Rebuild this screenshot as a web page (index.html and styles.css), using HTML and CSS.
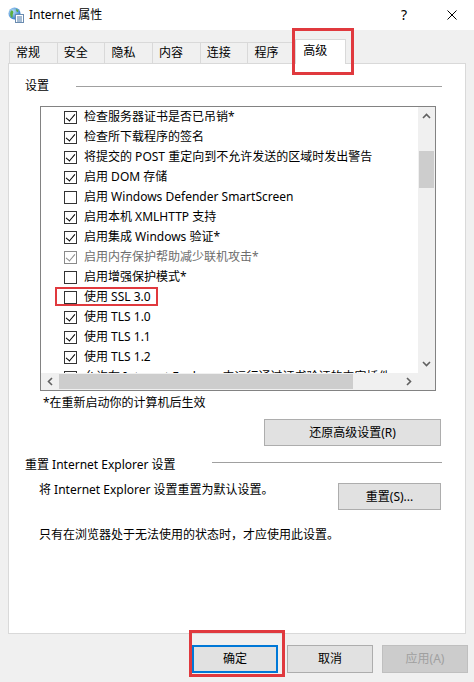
FILE: index.html
```html
<!DOCTYPE html>
<html lang="zh-CN">
<head>
<meta charset="utf-8">
<title>Internet 属性</title>
<link rel="stylesheet" href="styles.css">
</head>
<body>
<div class="window">
  <div class="titlebar">
    <svg class="app-icon" width="16" height="16" viewBox="0 0 16 16">
      <defs>
        <radialGradient id="g" cx="0.35" cy="0.35" r="0.7">
          <stop offset="0" stop-color="#bfe3fb"/>
          <stop offset="1" stop-color="#2a78c8"/>
        </radialGradient>
      </defs>
      <circle cx="6.5" cy="6.5" r="6" fill="url(#g)"/>
      <path d="M3 3.5 C5 3 6 5 5 6.5 C4 8 5.5 9.5 4 11 C2 9.5 1.5 6 3 3.5Z" fill="#5cae3c"/>
      <path d="M8 2 C10 2.5 11 4 10 5 C9 5.5 8 4 8 2Z" fill="#5cae3c"/>
      <rect x="7.5" y="7.5" width="8" height="8" fill="#fff" stroke="#6b8cb0"/>
      <path d="M9 10h5M9 12h5M9 14h5" stroke="#4a78a8" stroke-width="1"/>
    </svg>
    <span class="title">Internet 属性</span>
    <span class="tb-help">?</span>
    <svg class="tb-close" width="10" height="10" viewBox="0 0 10 10"><path d="M0.5 0.5L9.5 9.5M9.5 0.5L0.5 9.5" stroke="#000" stroke-width="1"/></svg>
  </div>

  <div class="tabs">
    <div class="tab">常规</div>
    <div class="tab">安全</div>
    <div class="tab">隐私</div>
    <div class="tab">内容</div>
    <div class="tab">连接</div>
    <div class="tab">程序</div>
    <div class="tab selected">高级</div>
  </div>

  <div class="panel">
    <div class="group-head">
      <span class="gh-text gh-settings">设置</span>
      <span class="gh-line line-settings"></span>
    </div>

    <div class="listbox">
      <div class="list-content">
        <div class="row"><span class="cb checked"></span><span>检查服务器证书是否已吊销*</span></div>
        <div class="row"><span class="cb checked"></span><span>检查所下载程序的签名</span></div>
        <div class="row"><span class="cb checked"></span><span>将提交的 POST 重定向到不允许发送的区域时发出警告</span></div>
        <div class="row"><span class="cb checked"></span><span>启用 DOM 存储</span></div>
        <div class="row"><span class="cb"></span><span>启用 Windows Defender SmartScreen</span></div>
        <div class="row"><span class="cb checked"></span><span>启用本机 XMLHTTP 支持</span></div>
        <div class="row"><span class="cb checked"></span><span>启用集成 Windows 验证*</span></div>
        <div class="row disabled"><span class="cb checked"></span><span>启用内存保护帮助减少联机攻击*</span></div>
        <div class="row"><span class="cb"></span><span>启用增强保护模式*</span></div>
        <div class="row"><span class="cb"></span><span>使用 SSL 3.0</span></div>
        <div class="row"><span class="cb checked"></span><span>使用 TLS 1.0</span></div>
        <div class="row"><span class="cb checked"></span><span>使用 TLS 1.1</span></div>
        <div class="row"><span class="cb checked"></span><span>使用 TLS 1.2</span></div>
        <div class="row"><span class="cb"></span><span>允许在 Internet Explorer 中运行通过证书验证的内容插件</span></div>
      </div>
      <div class="vscroll">
        <svg class="arrow" width="9" height="6" viewBox="0 0 9 6"><path d="M1 5L4.5 1.5L8 5" fill="none" stroke="#606060" stroke-width="1.6"/></svg>
        <div class="vtrack"><div class="vthumb"></div></div>
        <svg class="arrow" width="9" height="6" viewBox="0 0 9 6"><path d="M1 1L4.5 4.5L8 1" fill="none" stroke="#606060" stroke-width="1.6"/></svg>
      </div>
      <div class="hscroll">
        <svg class="arrow" width="6" height="9" viewBox="0 0 6 9"><path d="M5 1L1.5 4.5L5 8" fill="none" stroke="#606060" stroke-width="1.6"/></svg>
        <div class="htrack"><div class="hthumb"></div></div>
        <svg class="arrow" width="6" height="9" viewBox="0 0 6 9"><path d="M1 1L4.5 4.5L1 8" fill="none" stroke="#606060" stroke-width="1.6"/></svg>
      </div>
      <div class="corner"></div>
    </div>

    <div class="note">*在重新启动你的计算机后生效</div>
    <div class="btn-row-right">
      <button class="btn btn-restore">还原高级设置(R)</button>
    </div>

    <div class="group-head reset-head">
      <span class="gh-text gh-reset">重置 Internet Explorer 设置</span>
      <span class="gh-line line-reset"></span>
    </div>
    <div class="reset-row">
      <span class="reset-text">将 Internet Explorer 设置重置为默认设置。</span>
      <button class="btn btn-reset">重置(S)...</button>
    </div>
    <div class="reset-note">只有在浏览器处于无法使用的状态时，才应使用此设置。</div>
  </div>

  <div class="footer">
    <button class="btn btn-foot btn-default">确定</button>
    <button class="btn btn-foot">取消</button>
    <button class="btn btn-foot btn-disabled">应用(A)</button>
  </div>

  <div class="mark mark-tab"></div>
  <div class="mark mark-ssl"></div>
  <div class="mark mark-ok"></div>
</div>
</body>
</html>
```

FILE: styles.css
```css
* { box-sizing: border-box; }
html, body { margin: 0; padding: 0; }
body {
  background: #f0f0f0;
  font-family: "Noto Sans", "Noto Sans CJK SC", sans-serif;
  font-size: 12px;
  color: #000;
}
.window {
  position: relative;
  width: 474px;
  height: 682px;
  overflow: hidden;
}

/* title bar */
.titlebar {
  height: 30px;
  background: #fff;
  display: flex;
  align-items: center;
  padding-left: 8px;
}
.app-icon { flex: none; }
.title { margin-left: 5px; font-size: 12px; line-height: 16px; }
.tb-help {
  margin-left: auto;
  font-size: 14px;
  line-height: 16px;
  width: 12px;
  text-align: center;
}
.tb-close { margin-left: 37px; margin-right: 17px; }

/* tabs */
.tabs {
  height: 33px;
  display: flex;
  align-items: flex-end;
  padding-left: 9px;
  position: relative;
  z-index: 2;
}
.tab {
  width: 48.7px;
  height: 21px;
  margin-right: -1px;
  border: 1px solid #d9d9d9;
  border-bottom: none;
  padding-left: 6px;
  line-height: 19px;
  background: #f0f0f0;
}
.tab.selected {
  width: 51px;
  height: 25px;
  margin-bottom: -1px;
  margin-left: 0;
  background: #fff;
  padding-left: 7px;
  line-height: 22px;
  border-color: #d9d9d9;
}

/* panel */
.panel {
  margin: 0 8px;
  height: 571px;
  background: #fff;
  border: 1px solid #d9d9d9;
  position: relative;
  z-index: 1;
}
.group-head {
  display: flex;
  align-items: center;
  height: 16px;
  margin-top: 14px;
  padding-left: 16px;
}
.gh-text { line-height: 16px; white-space: nowrap; }
.gh-settings { width: 51px; }
.gh-reset { width: 187px; }
.gh-line { height: 1px; background: #a0a0a0; }
.line-settings { width: 366px; }
.line-reset { width: 230px; margin-top: -5px; }

/* list box */
.listbox {
  margin: 12px 0 0 31px;
  width: 396px;
  height: 285px;
  border: 1px solid #828282;
  display: grid;
  grid-template-columns: 1fr 17px;
  grid-template-rows: 1fr 17px;
  background: #fff;
}
.list-content {
  overflow: hidden;
  padding-left: 23px;
}
.row {
  height: 20px;
  display: flex;
  align-items: center;
  white-space: nowrap;
  line-height: 16px;
}
.row.disabled { color: #6d6d6d; }
.cb {
  flex: none;
  width: 13px;
  height: 13px;
  border: 1px solid #333;
  background: #fff;
  margin-right: 7px;
  position: relative;
}
.cb.checked::after {
  content: "";
  position: absolute;
  left: 3px;
  top: 0px;
  width: 4px;
  height: 8px;
  border-right: 1.2px solid #000;
  border-bottom: 1.2px solid #000;
  transform: rotate(40deg);
}
.row.disabled .cb { border-color: #8a8a8a; }
.row.disabled .cb.checked::after { border-color: #8a8a8a; }

.vscroll {
  background: #f0f0f0;
  display: flex;
  flex-direction: column;
  align-items: center;
}
.vscroll .arrow { margin: 6px 0; flex: none; }
.vtrack { flex: 1; width: 100%; padding-top: 26px; }
.vthumb { width: 15px; margin: 0 auto; height: 37px; background: #cdcdcd; }

.hscroll {
  background: #f0f0f0;
  display: flex;
  align-items: center;
}
.hscroll .arrow { margin: 0 6px; flex: none; }
.htrack { flex: 1; height: 100%; display: flex; align-items: center; }
.hthumb { width: 294px; height: 15px; background: #cdcdcd; }
.corner { background: #f0f0f0; }

.note {
  margin: 4px 0 0 34px;
  line-height: 16px;
}
.btn-row-right {
  display: flex;
  justify-content: flex-end;
  padding-right: 24px;
  margin-top: 8px;
}
.btn {
  font-family: inherit;
  font-size: 12px;
  color: #000;
  background: #e1e1e1;
  border: 1px solid #adadad;
  padding: 0;
  line-height: 16px;
}
.btn-restore { width: 177px; height: 27px; }

.reset-head { margin-top: 11px; }
.reset-row {
  display: flex;
  align-items: flex-start;
  margin-top: 9px;
  padding-left: 30px;
  padding-right: 24px;
}
.reset-text { line-height: 16px; flex: 1; }
.btn-reset { width: 103px; height: 27px; margin-top: 1px; }
.reset-note {
  margin: 17px 0 0 30px;
  line-height: 16px;
}

/* footer */
.footer {
  display: flex;
  justify-content: flex-end;
  gap: 9px;
  padding-right: 6px;
  margin-top: 11px;
}
.btn-foot { width: 86px; height: 28px; }
.btn-default { border: 2px solid #0078d7; }
.btn-disabled { background: #cccccc; border-color: #bfbfbf; color: #a0a0a0; }

/* red annotation boxes */
.mark {
  position: absolute;
  border: 3px solid #e0393e;
  z-index: 5;
  pointer-events: none;
}
.mark-tab { left: 292px; top: 28px; width: 62px; height: 47px; }
.mark-ssl { left: 55px; top: 287px; width: 103px; height: 19px; border-width: 2px; }
.mark-ok { left: 189px; top: 630px; width: 96px; height: 47px; }
```
